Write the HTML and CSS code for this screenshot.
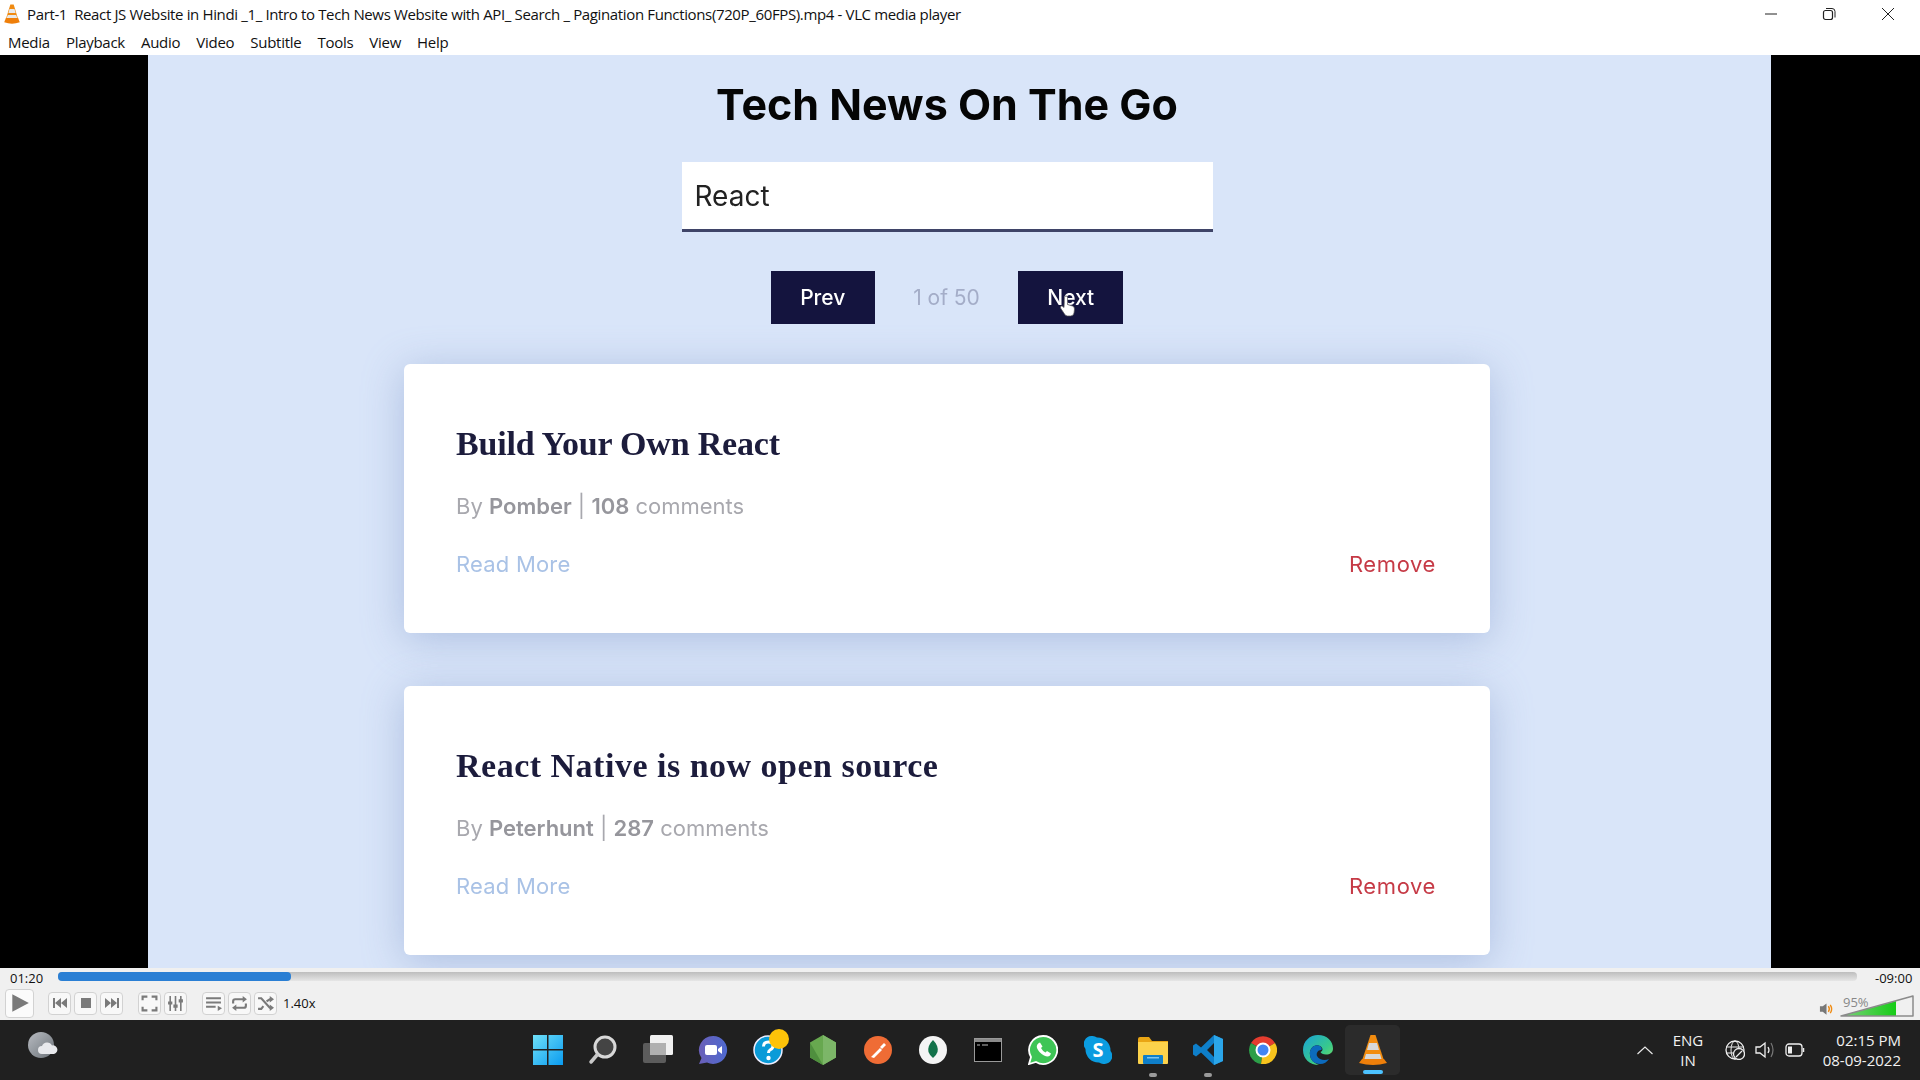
FILE: index.html
```html
<!DOCTYPE html>
<html lang="en">
<head>
<meta charset="utf-8">
<title>VLC media player</title>
<link rel="stylesheet" href="styles.css">
</head>
<body>
<div class="app">
  <header class="titlebar">
    <svg class="cone-small" viewBox="0 0 28 36"><path d="M11 1h6l8 26h-22z" fill="#f08a10"/><path d="M9.5 9h9l2 7h-13z" fill="#e8e8e8"/><path d="M6.500 20h15l2 5h-19z" fill="#e8e8e8"/><path d="M3 25h22l3 8q-14 5-28 0z" fill="#ef7f0a"/></svg>
    <span class="wintitle">Part-1&nbsp; React JS Website in Hindi _1_ Intro to Tech News Website with API_ Search _ Pagination Functions(720P_60FPS).mp4 - VLC media player</span>
    <div class="winbtns">
      <span class="winbtn"><svg viewBox="0 0 14 14" width="14" height="14"><path d="M1 7h12" stroke="#222" fill="none"/></svg></span>
      <span class="winbtn"><svg viewBox="0 0 14 14" width="14" height="14"><rect x="1.500" y="3.500" width="9" height="9" rx="2" stroke="#222" fill="none" stroke-width="1.200"/><path d="M4 1.500h6a3 3 0 0 1 3 3v6" stroke="#222" fill="none"/></svg></span>
      <span class="winbtn"><svg viewBox="0 0 14 14" width="14" height="14"><path d="M1 1l12 12M13 1L1 13" stroke="#222" fill="none"/></svg></span>
    </div>
  </header>
  <nav class="menubar">
    <span>Media</span><span>Playback</span><span>Audio</span><span>Video</span><span>Subtitle</span><span>Tools</span><span>View</span><span>Help</span>
  </nav>
  <main class="video">
    <section class="page">
      <h1 class="heading">Tech News On The Go</h1>
      <div class="search">React</div>
      <div class="pager">
        <span class="pbtn">Prev</span>
        <span class="pcount">1 of 50</span>
        <span class="pbtn pnext">Next
          <svg class="hand" viewBox="0 0 16 22"><path d="M4.500 2.500a1.500 1.500 0 0 1 3 0v7l5 1.500q2 .6 2 3l-.5 4q-.5 3-3.500 3h-3q-2 0-3-2l-4-6q-.5-1.500 1-2 1-.2 2.500 1.500z" fill="#fff" stroke="#555" stroke-width=".7"/></svg>
        </span>
      </div>
      <article class="card">
        <h2 class="card-title">Build Your Own React</h2>
        <p class="card-meta">By <b>Pomber</b> | <b>108</b> comments</p>
        <div class="card-links"><span class="more">Read More</span><span class="remove">Remove</span></div>
      </article>
      <article class="card">
        <h2 class="card-title card-title-wide">React Native is now open source</h2>
        <p class="card-meta">By <b>Peterhunt</b> | <b>287</b> comments</p>
        <div class="card-links"><span class="more">Read More</span><span class="remove">Remove</span></div>
      </article>
    </section>
  </main>
  <section class="controls">
    <div class="seekrow">
      <span class="time">01:20</span>
      <div class="seek"><div class="seek-fill"></div></div>
      <span class="time time-end">-09:00</span>
    </div>
    <div class="btnrow">
      <span class="cbtn cbtn-play"><svg viewBox="0 0 20 20" width="22" height="22"><path d="M3 2l15 8-15 8z" fill="#7a7a7a"/></svg></span>
      <div class="cgroup g-first">
        <span class="cbtn"><svg viewBox="0 0 16 16" width="16" height="16"><path d="M1 3h2v10H1zM9 3v10L3 8zM15 3v10L9 8z" fill="#7a7a7a"/></svg></span>
        <span class="cbtn"><svg viewBox="0 0 16 16" width="16" height="16"><path d="M3 3h10v10H3z" fill="#7a7a7a"/></svg></span>
        <span class="cbtn"><svg viewBox="0 0 16 16" width="16" height="16"><path d="M1 3l6 5-6 5zM7 3l6 5-6 5zM13 3h2v10h-2z" fill="#7a7a7a"/></svg></span>
      </div>
      <div class="cgroup">
        <span class="cbtn"><svg viewBox="0 0 16 16" width="17" height="17"><path d="M1.500 5V1.500H6M10 1.500h4.500V5M14.500 11v3.500H10M6 14.500H1.500V11" stroke="#7a7a7a" stroke-width="2" fill="none"/></svg></span>
        <span class="cbtn"><svg viewBox="0 0 16 16" width="17" height="17"><path d="M3 1v14M8 1v14M13 1v14" stroke="#7a7a7a" stroke-width="1.500"/><path d="M1 6h4v3H1zM6 9h4v3H6zM11 4h4v3h-4z" fill="#7a7a7a"/></svg></span>
      </div>
      <div class="cgroup">
        <span class="cbtn"><svg viewBox="0 0 16 16" width="17" height="17"><path d="M1 3h14M1 7h14M1 11h9" stroke="#7a7a7a" stroke-width="2"/><path d="M12 10l4 2.500-4 2.500z" fill="#7a7a7a"/></svg></span>
        <span class="cbtn"><svg viewBox="0 0 16 16" width="17" height="17"><path d="M2 8V6q0-2 2-2h8M14 8v2q0 2-2 2H4" stroke="#7a7a7a" stroke-width="2" fill="none"/><path d="M11 1l4 3-4 3zM5 9l-4 3 4 3z" fill="#7a7a7a"/></svg></span>
        <span class="cbtn"><svg viewBox="0 0 16 16" width="17" height="17"><path d="M1 3h3l8 9h1M1 13h3l2-2.500M9 6l3-2h1" stroke="#7a7a7a" stroke-width="2" fill="none"/><path d="M12 1l4 3-4 3zM12 9l4 3-4 3z" fill="#7a7a7a"/></svg></span>
      </div>
      <span class="speed">1.40x</span>
      <div class="volume">
        <svg class="vol-ico" viewBox="0 0 16 14"><path d="M1 4h3l4-3v12l-4-3H1z" fill="#777"/><path d="M10 4q2 3 0 6M12 2.500q3 4.500 0 9" stroke="#f08a10" stroke-width="1.500" fill="none"/></svg>
        <div class="vol-wedge">
          <svg viewBox="0 0 74 22" width="74" height="22"><defs><linearGradient id="vg" x1="0" x2="1"><stop offset="0" stop-color="#7ed07e"/><stop offset="1" stop-color="#16cc16"/></linearGradient></defs><path d="M1 21L56 6v15z" fill="url(#vg)"/><path d="M1 21L73 1v20z" fill="none" stroke="#8a8a8a" stroke-width="1.500" stroke-linejoin="round"/></svg>
          <span class="vol-pct">95%</span>
        </div>
      </div>
    </div>
  </section>
  <footer class="taskbar">
    <svg class="weather" viewBox="0 0 30 28"><defs><linearGradient id="wg" x1="0" y1="0" x2="1" y2="1"><stop offset="0" stop-color="#b8bcc2"/><stop offset="1" stop-color="#6c7278"/></linearGradient></defs><circle cx="13" cy="13" r="13" fill="url(#wg)"/><path d="M14 22a4 4 0 0 1 0-8 5.500 5.500 0 0 1 10-.5 4.300 4.300 0 0 1 2 8.500z" fill="#e8e9ec"/></svg>
    <div class="tb-apps">
      <span class="tb"><svg viewBox="0 0 30 30" width="30" height="30"><defs><linearGradient id="wi" x1="0" y1="0" x2="1" y2="1"><stop offset="0" stop-color="#6fe0f8"/><stop offset="1" stop-color="#0a9bf0"/></linearGradient></defs><path d="M0 0h14v14H0zM15.500 0H30v14H15.500zM0 15.500h14V30H0zM15.500 15.500H30V30H15.500z" fill="url(#wi)"/></svg></span>
      <span class="tb"><svg viewBox="0 0 30 30" width="30" height="30"><circle cx="17" cy="12" r="10" fill="#444" stroke="#d8d8d8" stroke-width="3"/><path d="M9 20l-6 7" stroke="#c8c8c8" stroke-width="3.500" stroke-linecap="round"/></svg></span>
      <span class="tb"><svg viewBox="0 0 30 30" width="30" height="30"><rect x="0" y="8" width="23" height="20" rx="2" fill="#5c5c5c"/><rect x="7" y="0" width="23" height="20" rx="1.500" fill="#f0f0f0"/><rect x="7" y="8" width="16" height="12" fill="#b0b0b0"/></svg></span>
      <span class="tb"><svg viewBox="0 0 30 30" width="30" height="30"><defs><linearGradient id="ch" x1="0" x2="1"><stop offset="0" stop-color="#6a5fb8"/><stop offset="1" stop-color="#4f6ad0"/></linearGradient></defs><path d="M15 1a14 14 0 1 1-6 26.600L1 29l2.500-6A14 14 0 0 1 15 1z" fill="url(#ch)"/><rect x="7" y="10" width="12" height="10" rx="2" fill="#fff"/><path d="M20 14l4-3v8l-4-3z" fill="#fff"/></svg></span>
      <span class="tb tb-badge"><svg viewBox="0 0 30 30" width="30" height="30"><circle cx="15" cy="15" r="14" fill="#0a9bd8" stroke="#eef" stroke-width="1.500"/><path d="M10.500 11.500q0-4.500 4.800-4.500t4.700 4q0 2.500-3 4-1.500.8-1.500 3" fill="none" stroke="#fff" stroke-width="3"/><circle cx="15.500" cy="23" r="2.200" fill="#fff"/></svg><i class="dot"></i></span>
      <span class="tb"><svg viewBox="0 0 28 30" width="28" height="30"><path d="M14 0l13 7.500v15L14 30 1 22.500v-15z" fill="#67a84f"/><path d="M14 0l13 7.500v15L14 30z" fill="#7cb668"/><path d="M1 7.500L14 30 1 22.500z" fill="#4f8f3e"/></svg></span>
      <span class="tb"><svg viewBox="0 0 28 28" width="28" height="28"><circle cx="14" cy="14" r="14" fill="#ef6c35"/><path d="M7 21l9-9 2 2-8 8zM16 11l4-4 2 2-4 4z" fill="#fff"/></svg></span>
      <span class="tb"><svg viewBox="0 0 28 28" width="28" height="28"><circle cx="14" cy="14" r="14" fill="#f4f4f4"/><path d="M14 4q6 6 4.500 12-1 3-4.500 6-3.500-3-4.500-6Q8 10 14 4z" fill="#13724a"/></svg></span>
      <span class="tb"><svg viewBox="0 0 28 24" width="28" height="24"><rect x=".5" y=".5" width="27" height="23" fill="#000" stroke="#999"/><path d="M1 1h26v3H1z" fill="#8a8a8a"/><path d="M3 7h3M8 7h6" stroke="#bbb"/></svg></span>
      <span class="tb"><svg viewBox="0 0 30 30" width="30" height="30"><path d="M15 1a14 14 0 1 1-7 26L1 29l2-7A14 14 0 0 1 15 1z" fill="#3ec556" stroke="#fff" stroke-width="1.800"/><path d="M10 8.500l2-1 2.500 4-1.500 1.500q1.500 3 4.500 4.500l1.500-1.500 4 2.500-1 2q-2 2-6 0-5-2.500-7-7.500-.8-3 1.500-4.500z" fill="#fff"/></svg></span>
      <span class="tb"><svg viewBox="0 0 28 28" width="28" height="28"><path d="M8 0a8 8 0 0 1 5 1.500A13 13 0 0 1 26.500 15 8 8 0 0 1 20 28a8 8 0 0 1-5-1.500A13 13 0 0 1 1.500 13 8 8 0 0 1 8 0z" fill="#0b9ce0"/><text class="skype-s" x="14" y="21">S</text></svg></span>
      <span class="tb"><svg viewBox="0 0 30 27" width="30" height="27"><path d="M0 2q0-2 2-2h9l3 4h16v4H0z" fill="#e9a514"/><path d="M0 5h30v21q0 1-1 1H1q-1 0-1-1z" fill="#fcd24b"/><rect x="5" y="18" width="20" height="9" rx="1" fill="#0f7fc9"/><rect x="9" y="20" width="12" height="1.500" fill="#7cc4f0"/></svg><i class="run"></i></span>
      <span class="tb"><svg viewBox="0 0 30 30" width="30" height="30"><path d="M21 0l9 4v22l-9 4L8 17.500l-5 4L0 19.500v-9l3-2 5 4zM21 8l-7 7 7 7z" fill="#0e7fca"/><path d="M21 0l9 4v22l-9 4z" fill="#2ba6ea"/></svg><i class="run"></i></span>
      <span class="tb"><svg viewBox="0 0 28 28" width="28" height="28"><path d="M14 14L26 7A14 14 0 0 0 2 7z" fill="#e53c2f"/><path d="M14 14L2 7a14 14 0 0 0 10 21z" fill="#2c9e48"/><path d="M14 14l-2 14A14 14 0 0 0 26 7z" fill="#f7c31d"/><circle cx="14" cy="14" r="6.500" fill="#4285f4" stroke="#fff" stroke-width="2"/></svg></span>
      <span class="tb"><svg viewBox="0 0 30 30" width="30" height="30"><defs><linearGradient id="ed" x1="0" y1="0" x2="1" y2="1"><stop offset="0" stop-color="#19a3d8"/><stop offset=".6" stop-color="#38c98c"/><stop offset="1" stop-color="#7fe05a"/></linearGradient></defs><path d="M15 0c9 0 15 6 15 13.500 0 4-3 6-7 6-3 0-5-1-5.500-2.500 2.500-1 3-4-.5-6-5-2.500-11 2-10 9 .5 5 4 8 9 10C7 30 0 24 0 15 0 6 7 0 15 0z" fill="url(#ed)"/><path d="M17 11c-5-2.500-11 2-10 9 .5 5 4 9 10 9 4 0 7-2 9-5-4 2-10 1-12-3-1-3 1-6 4-6 2-.5 0-3-1-4z" fill="#0c6bbd"/></svg></span>
      <span class="tb tb-active"><svg viewBox="0 0 28 30" width="28" height="30"><path d="M11.500 0h5l8 24h-21z" fill="#f28c0f"/><path d="M10 8h8l2 7H8z" fill="#d8d8d8"/><path d="M7 19h14l1.500 5h-17z" fill="#d8d8d8"/><path d="M3 24h22l3 4q-14 4-28 0z" fill="#ef7f0a"/></svg><i class="run run-active"></i></span>
    </div>
    <div class="tray">
      <svg class="chev" viewBox="0 0 16 9"><path d="M.5 8L8 1l7.500 7" stroke="#e8e8e8" stroke-width="1.200" fill="none"/></svg>
      <div class="lang"><span>ENG</span><span>IN</span></div>
      <svg class="t-ico" viewBox="0 0 20 20"><circle cx="10" cy="10" r="9" fill="none" stroke="#eee" stroke-width="1.300"/><ellipse cx="10" cy="10" rx="4" ry="9" fill="none" stroke="#eee"/><path d="M1 7h18M1 13h18" stroke="#eee"/><circle cx="14" cy="14" r="5.500" fill="#202020" stroke="#eee" stroke-width="1.300"/><path d="M11 17l6-6" stroke="#eee" stroke-width="1.300"/></svg>
      <svg class="t-ico" viewBox="0 0 20 20"><path d="M1 7h4l5-4v14l-5-4H1z" fill="none" stroke="#eee" stroke-width="1.300"/><path d="M13 7q2 3 0 6" stroke="#eee" stroke-width="1.300" fill="none"/><path d="M16 3q4 7 0 14" stroke="#777" stroke-width="1.200" fill="none"/></svg>
      <svg class="t-ico" viewBox="0 0 20 20"><rect x="1" y="4" width="16" height="12" rx="3" fill="none" stroke="#eee" stroke-width="1.300"/><rect x="3" y="6.500" width="4" height="7" fill="#eee"/><path d="M18.500 8v4" stroke="#eee" stroke-width="1.500"/></svg>
      <div class="clock"><span>02:15 PM</span><span>08-09-2022</span></div>
    </div>
  </footer>
</div>
</body>
</html>
```

FILE: styles.css
```css
* { box-sizing: border-box; }
html, body { margin: 0; height: 100%; overflow: hidden; }
body { font-family: "Open Sans", "Noto Sans", sans-serif; background: #f0f0f0; }
.app { width: 1920px; height: 1080px; display: flex; flex-direction: column; }

.titlebar { height: 28px; background: #fff; display: flex; align-items: center; padding-left: 4px; flex: none; }
.cone-small { width: 16px; height: 20px; flex: none; }
.wintitle { margin-left: 7px; font-size: 15px; color: #111; letter-spacing: -0.36px; white-space: nowrap; }
.winbtns { margin-left: auto; display: flex; padding-right: 3px; }
.winbtn { width: 58.500px; height: 28px; display: flex; align-items: center; justify-content: center; }

.menubar { height: 27px; background: #fff; display: flex; align-items: center; gap: 16px; padding-left: 8px; font-size: 15px; color: #111; letter-spacing: -0.27px; flex: none; }

.video { height: 913px; flex: none; background: #000; padding-left: 148px; overflow: hidden; }
.page { width: 1623px; height: 100%; padding-right: 25px; background: #d9e5f9; display: flex; flex-direction: column; align-items: center; font-family: Inter, "Open Sans", sans-serif; filter: blur(0.45px); }
.heading { margin: 25px 0 34px; font-size: 43px; line-height: 48px; font-weight: 700; color: #050505; letter-spacing: 0; }
.search { width: 531px; height: 70px; background: #fff; border-bottom: 3px solid #3f4468; padding: 0 13px; display: flex; align-items: center; font-size: 28px; font-weight: 400; color: #222; flex: none; }
.pager { margin: 39px 0 40px; display: flex; align-items: center; height: 53px; flex: none; }
.pbtn { width: 104px; height: 53px; background: #14143e; color: #fff; font-size: 21px; font-weight: 500; display: flex; align-items: center; justify-content: center; position: relative; }
.pnext { width: 105px; }
.pcount { width: 143.500px; text-align: center; font-size: 21px; color: #a4adc8; }
.hand { position: absolute; left: 42px; top: 24px; width: 16px; height: 22px; }
.card { width: 1086px; height: 269px; flex: none; background: #fff; border-radius: 6px; margin-bottom: 53px; padding: 60px 54px 0 52px; box-shadow: 0 6px 40px rgba(120, 145, 195, 0.45); }
.card-title { margin: 0; font-family: "Liberation Serif", serif; font-size: 34px; line-height: 40px; font-weight: 700; color: #1c1c3c; letter-spacing: -0.2px; }
.card-title-wide { letter-spacing: 0.5px; }
.card-meta { margin: 25px 0 0; font-size: 22px; line-height: 34px; color: #a8a8ae; }
.card-meta b { font-weight: 600; color: #96969c; }
.card-links { margin-top: 24px; display: flex; justify-content: space-between; font-size: 22px; line-height: 34px; letter-spacing: 0.2px; }
.more { color: #a9c2e6; }
.remove { color: #c63a46; letter-spacing: 0.6px; }

.controls { height: 52px; flex: none; background: #f0f0f0; display: flex; flex-direction: column; }
.seekrow { height: 20px; display: flex; align-items: center; padding: 0 10px; gap: 15px; }
.time { font-size: 13px; color: #111; width: 33px; margin-top: -1px; }
.time-end { width: 37px; margin-left: 3px; white-space: nowrap; }
.seek { width: 1799px; height: 9px; background: linear-gradient(#bdbdbd, #e6e6e6); border-radius: 4px; margin-top: -3px; flex: none; }
.seek-fill { width: 233px; height: 9px; background: #2a7fd4; border-radius: 4px; }
.btnrow { display: flex; align-items: center; height: 30px; padding-left: 5px; }
.cbtn { width: 23px; height: 23px; background: #f8f8f8; border: 1px solid #d2d2d2; border-radius: 4px; display: flex; align-items: center; justify-content: center; flex: none; }
.cbtn-play { width: 29px; height: 29px; background: #fbfbfb; }
.cgroup { display: flex; gap: 3px; margin-left: 15px; }
.g-first { margin-left: 14px; }
.speed { margin-left: 6px; font-size: 13px; color: #111; }
.volume { margin-left: auto; align-self: flex-end; display: flex; align-items: flex-end; gap: 6px; padding-right: 6px; padding-bottom: 1px; }
.vol-ico { width: 15px; height: 14px; margin-bottom: 1px; }
.vol-wedge { position: relative; width: 74px; height: 22px; }
.vol-wedge svg { display: block; }
.vol-pct { position: absolute; left: 3px; top: -2px; font-size: 13px; color: #888; }

.taskbar { height: 60px; flex: none; background: #202020; display: flex; align-items: center; position: relative; }
.weather { width: 30px; height: 28px; margin-left: 28px; margin-top: -8px; flex: none; }
.tb-apps { display: flex; margin-left: 462px; }
.tb { width: 55px; height: 60px; display: flex; align-items: center; justify-content: center; position: relative; }
.tb-badge .dot { position: absolute; left: 29px; top: 9px; width: 20px; height: 20px; border-radius: 50%; background: #fdc309; }
.run { position: absolute; bottom: 3px; left: 24px; width: 8px; height: 4px; border-radius: 2px; background: #9a9a9a; }
.tb-active { background: #2b2b2b; border-radius: 5px; height: 50px; margin-top: 5px; }
.run-active { width: 20px; left: 17.500px; bottom: 1px; background: #4cc2ff; }
.tray { margin-left: auto; display: flex; align-items: center; color: #f2f2f2; font-size: 15px; padding-right: 19px; }
.chev { width: 16px; height: 9px; }
.lang { display: flex; flex-direction: column; align-items: center; line-height: 20px; width: 40px; margin: 0 17px 0 15px; }
.t-ico { width: 20px; height: 20px; margin-right: 10px; }
.clock { display: flex; flex-direction: column; align-items: flex-end; line-height: 20px; width: 86px; white-space: nowrap; }
.skype-s { font-family: "Open Sans", sans-serif; font-weight: 700; font-size: 20px; fill: #fff; text-anchor: middle; }
```
